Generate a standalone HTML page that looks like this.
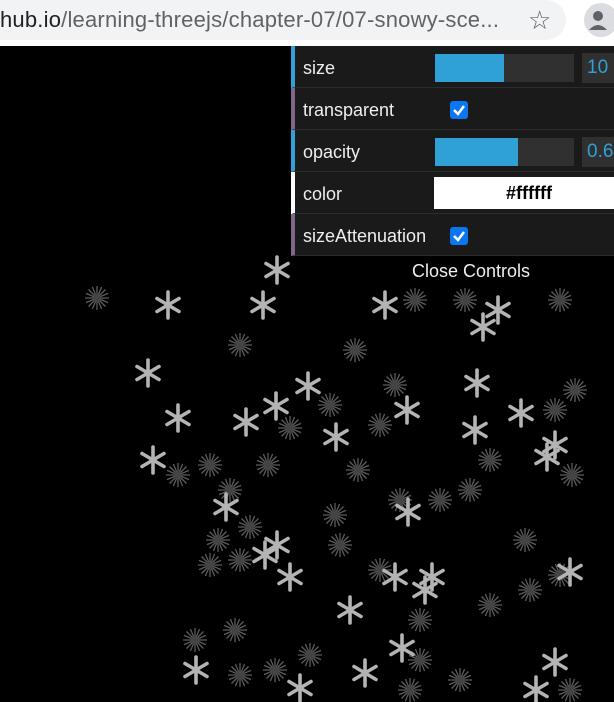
<!DOCTYPE html>
<html><head><style>
*{margin:0;padding:0;box-sizing:border-box}
body{width:614px;height:702px;background:#000;overflow:hidden;position:relative;font-family:"Liberation Sans",sans-serif}
#bar{position:absolute;left:0;top:0;width:614px;height:46px;background:#fff}
#url{position:absolute;left:-20px;top:0;width:586px;height:40px;background:#f1f3f4;border-radius:0 20px 20px 0;font-size:22px;letter-spacing:0.2px;color:#5f6368;line-height:40px;padding-left:20px;white-space:nowrap}
#url b{color:#202124;font-weight:normal}
#gui{position:absolute;left:291px;top:46px;width:323px;background:#1a1a1a}
.row{height:42px;border-bottom:1px solid #2c2c2c;position:relative;color:#eee;font-size:18px;line-height:44px;padding-left:8px;border-left:4px solid #2fa1d6}
.row.b{border-left-color:#806787}
.row.c{border-left-color:#fff}
.sl{position:absolute;left:140px;top:8px;width:139px;height:28px;background:#303030}
.sl i{display:block;height:100%;background:#2fa1d6}
.num{position:absolute;left:287px;top:7px;width:40px;height:30px;background:#303030;color:#2fa1d6;font-size:19px;line-height:30px;padding-left:5px}
.cb{position:absolute;left:155px;top:13px;width:18px;height:18px;background:#0b76f0;border-radius:3px}
.cb svg{display:block}
.col{position:absolute;left:139px;top:5px;width:190px;height:32px;background:#fff;color:#000;font-weight:bold;text-align:center;line-height:32px;font-size:18px}
#close{position:absolute;left:291px;top:256px;width:323px;height:30px;background:#000;color:#eee;font-size:18px;line-height:30px;padding-left:121px}
</style></head><body>
<svg width="614" height="702" style="position:absolute;left:0;top:0">
<defs>
<g id="s" stroke="#b4b4b4" stroke-width="3.6" stroke-linecap="round"><line x1="0" y1="-13" x2="0" y2="13"/><line x1="-11" y1="-6.5" x2="11" y2="6.5"/><line x1="-11" y1="6.5" x2="11" y2="-6.5"/></g>
<g id="f" stroke="#5c5c5c" stroke-width="1.3"><line x1="0" y1="-12" x2="0" y2="12"/><line x1="-12" y1="0" x2="12" y2="0"/><line x1="-8.5" y1="-8.5" x2="8.5" y2="8.5"/><line x1="-8.5" y1="8.5" x2="8.5" y2="-8.5"/><line x1="-4.6" y1="-11" x2="4.6" y2="11"/><line x1="-11" y1="-4.6" x2="11" y2="4.6"/><line x1="-4.6" y1="11" x2="4.6" y2="-11"/><line x1="-11" y1="4.6" x2="11" y2="-4.6"/><circle r="4" fill="#444" stroke="none"/></g>
</defs>
<g>
<use href="#f" x="97" y="298"/><use href="#f" x="240" y="345"/><use href="#f" x="355" y="350"/><use href="#f" x="415" y="300"/><use href="#f" x="465" y="300"/><use href="#f" x="560" y="300"/><use href="#f" x="395" y="385"/><use href="#f" x="330" y="405"/><use href="#f" x="290" y="428"/><use href="#f" x="575" y="390"/><use href="#f" x="555" y="410"/><use href="#f" x="380" y="425"/><use href="#f" x="210" y="465"/><use href="#f" x="268" y="465"/><use href="#f" x="178" y="475"/><use href="#f" x="358" y="470"/><use href="#f" x="490" y="460"/><use href="#f" x="470" y="490"/><use href="#f" x="572" y="475"/><use href="#f" x="230" y="490"/><use href="#f" x="440" y="500"/><use href="#f" x="335" y="515"/><use href="#f" x="400" y="500"/><use href="#f" x="250" y="527"/><use href="#f" x="218" y="540"/><use href="#f" x="210" y="565"/><use href="#f" x="240" y="560"/><use href="#f" x="340" y="545"/><use href="#f" x="525" y="540"/><use href="#f" x="380" y="570"/><use href="#f" x="560" y="575"/><use href="#f" x="530" y="590"/><use href="#f" x="490" y="605"/><use href="#f" x="420" y="620"/><use href="#f" x="235" y="630"/><use href="#f" x="195" y="640"/><use href="#f" x="310" y="655"/><use href="#f" x="275" y="670"/><use href="#f" x="240" y="675"/><use href="#f" x="420" y="660"/><use href="#f" x="460" y="680"/><use href="#f" x="570" y="690"/><use href="#f" x="410" y="690"/>
<use href="#s" x="277" y="270"/><use href="#s" x="168" y="305"/><use href="#s" x="263" y="305"/><use href="#s" x="385" y="305"/><use href="#s" x="483" y="327"/><use href="#s" x="498" y="310"/><use href="#s" x="148" y="373"/><use href="#s" x="308" y="386"/><use href="#s" x="477" y="383"/><use href="#s" x="178" y="418"/><use href="#s" x="246" y="422"/><use href="#s" x="276" y="406"/><use href="#s" x="407" y="410"/><use href="#s" x="521" y="413"/><use href="#s" x="475" y="430"/><use href="#s" x="336" y="437"/><use href="#s" x="153" y="460"/><use href="#s" x="547" y="457"/><use href="#s" x="555" y="445"/><use href="#s" x="226" y="507"/><use href="#s" x="408" y="512"/><use href="#s" x="277" y="545"/><use href="#s" x="265" y="555"/><use href="#s" x="290" y="577"/><use href="#s" x="395" y="577"/><use href="#s" x="432" y="577"/><use href="#s" x="425" y="590"/><use href="#s" x="570" y="572"/><use href="#s" x="350" y="610"/><use href="#s" x="402" y="648"/><use href="#s" x="555" y="662"/><use href="#s" x="196" y="670"/><use href="#s" x="300" y="688"/><use href="#s" x="365" y="673"/><use href="#s" x="536" y="690"/>
</g>
</svg>
<div id="bar"><div id="url"><b>hub.io</b>/learning-threejs/chapter-07/07-snowy-sce...</div>
<div style="position:absolute;left:528px;top:5px;font-size:26px;color:#5f6368">☆</div>
<div style="position:absolute;left:584px;top:3px;width:34px;height:34px;border-radius:50%;background:#dadce0"><svg width="34" height="34"><circle cx="14" cy="13" r="5" fill="#5f6368"/><path d="M5 27 Q14 17 23 27 Z" fill="#5f6368"/></svg></div>
</div>
<div id="gui">
<div class="row">size<div class="sl"><i style="width:69px"></i></div><div class="num">10</div></div>
<div class="row b">transparent<div class="cb"><svg width="18" height="18"><path d="M4 9 L8 13 L14 5" stroke="#fff" stroke-width="2.5" fill="none"/></svg></div></div>
<div class="row">opacity<div class="sl"><i style="width:83px"></i></div><div class="num">0.6</div></div>
<div class="row c">color<div class="col">#ffffff</div></div>
<div class="row b">sizeAttenuation<div class="cb"><svg width="18" height="18"><path d="M4 9 L8 13 L14 5" stroke="#fff" stroke-width="2.5" fill="none"/></svg></div></div>
</div>
<div id="close">Close Controls</div>
</body></html>
